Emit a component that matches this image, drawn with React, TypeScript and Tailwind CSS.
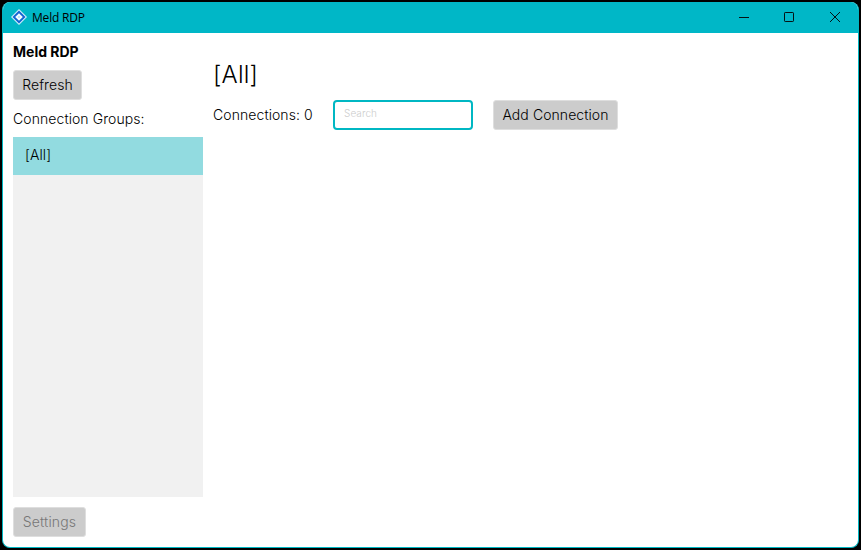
export default function App() {
  return (
    <div className="h-[550px] w-[861px] overflow-hidden bg-black pt-[2px] pl-[2px] font-['Inter',sans-serif] text-[14px] leading-[18px] font-light tracking-[0.08px] text-black">
      <div className="flex h-[546px] w-[857px] flex-col overflow-hidden rounded-lg border border-t-0 border-[#00b7c3] bg-white">
        <header className="flex h-[31px] shrink-0 items-center bg-[#00b7c7] pl-2">
          <svg width="16" height="16" viewBox="0 0 16 16" className="mb-px shrink-0">
            <path d="M8 0 16 8 8 16 0 8Z" fill="#d5f1fb" />
            <path d="M8 1.5 14.5 8 8 14.5 1.5 8Z" fill="#1264d2" />
            <path d="M8 4.2 11.8 8 8 11.8 4.2 8Z" fill="#f2faff" />
            <path d="M8 6.8 9.2 8 8 9.2 6.8 8Z" fill="#a5dcf0" />
          </svg>
          <span className="ml-[5px] grow font-['Open_Sans',sans-serif] text-[12px] font-normal tracking-[-0.2px]">Meld RDP</span>
          <svg width="120" height="31" viewBox="0 0 120 31" fill="none" stroke="#061214" className="shrink-0">
            <path d="M1 15.5h10" />
            <rect x="46.5" y="10.5" width="9" height="9" rx="0.7" />
            <path d="m92 10 10 10m0-10-10 10" />
          </svg>
        </header>
        <div className="flex min-h-0 grow pl-[10px]">
          <aside className="flex w-[190px] flex-col items-start">
            <h1 className="mt-[10px] font-bold tracking-normal">Meld RDP</h1>
            <button className="mt-[9px] h-[30px] w-[69px] rounded-[3px] border border-[#dedede] bg-[#cccccc]">Refresh</button>
            <p className="mt-[10px]">Connection Groups:</p>
            <ul className="mt-[9px] h-[360px] w-full bg-[#f1f1f1]">
              <li className="flex h-[38px] items-center bg-[#92dbe0] pb-0.5 pl-3">[All]</li>
            </ul>
            <button className="mt-[10px] h-[30px] w-[73px] rounded-[3px] border border-[#dedede] bg-[#cccccc] tracking-[0.16px] text-[#777777]">Settings</button>
          </aside>
          <main className="ml-[10px]">
            <h2 className="mt-[27px] text-[24px] leading-[30px] tracking-[0.2px]">[All]</h2>
            <div className="mt-[10px] flex h-[30px] items-center">
              <span className="w-[120px]">Connections: 0</span>
              <input placeholder="Search" className="h-[30px] w-[140px] rounded-[4px] border-2 border-[#00b7c3] pb-[4px] pl-[9px] text-[10px] outline-none placeholder:text-[#cccccc]" />
              <button className="ml-5 h-[30px] w-[125px] rounded-[3px] border border-[#dedede] bg-[#cccccc]">Add Connection</button>
            </div>
          </main>
        </div>
      </div>
    </div>
  );
}
